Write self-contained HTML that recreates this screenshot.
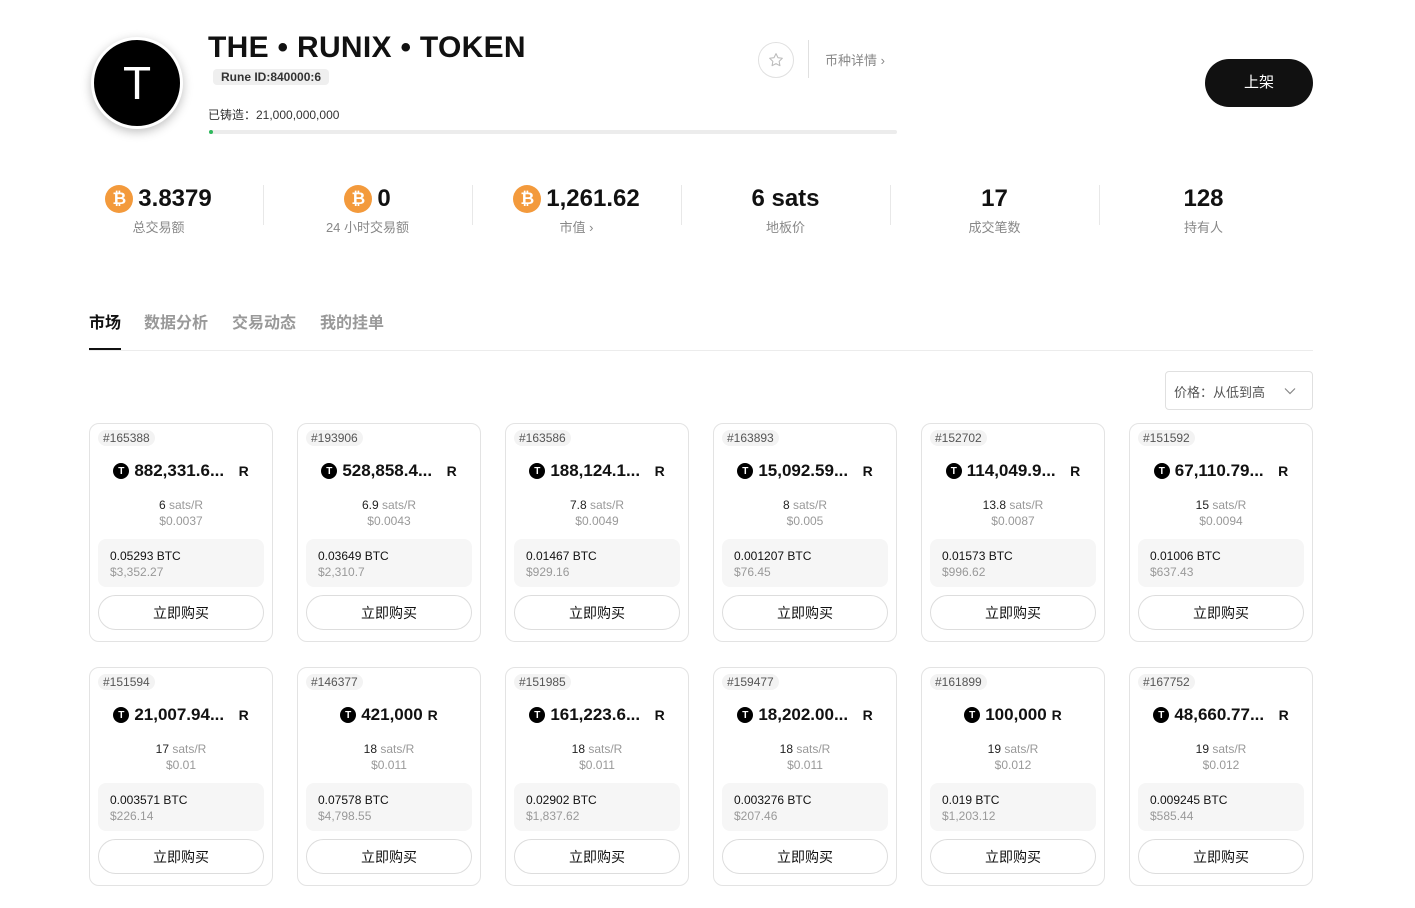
<!DOCTYPE html>
<html><head><meta charset="utf-8"><style>
*{margin:0;padding:0;box-sizing:border-box}
body{width:1415px;height:908px;background:#fff;font-family:"Liberation Sans","Noto Sans CJK SC",sans-serif;color:#111;position:relative;overflow:hidden}
.a{position:absolute}
.logo{left:91px;top:37px;width:92px;height:92px;border-radius:50%;background:#000;border:3px solid #fff;box-shadow:0 3px 10px rgba(0,0,0,.25);color:#fff;font-size:46px;text-align:center;line-height:86px}
.stat{width:209px;text-align:center}
.stat .v{font-size:24px;font-weight:bold;height:32px;display:flex;align-items:center;justify-content:center;gap:5px}
.stat .l{font-size:13px;color:#888;margin-top:2px}
.btc{width:28px;height:28px;border-radius:50%;background:#f39a3c;color:#fff;font-size:17px;font-weight:bold;display:inline-flex;align-items:center;justify-content:center}
.div{width:1px;height:40px;background:#e8e8e8;top:185px}
.card{width:184px;height:219px;border:1px solid #e3e3e3;border-radius:10px;background:#fff}
.card .id{position:absolute;left:8px;top:6px;background:#f3f3f3;border-radius:8px;font-size:12px;color:#555;padding:1px 5px}
.card .amt{position:absolute;left:0;right:0;top:37px;text-align:center;font-size:17px;font-weight:bold;display:flex;justify-content:center;align-items:center;gap:5px}
.t{width:16px;height:16px;border-radius:50%;background:#000;color:#fff;font-size:10px;display:inline-flex;align-items:center;justify-content:center}
.card .s{position:absolute;left:0;right:0;top:74px;text-align:center;font-size:12px;color:#222}
.card .s span{color:#999}
.card .u{position:absolute;left:0;right:0;top:90px;text-align:center;font-size:12px;color:#999}
.card .box{position:absolute;left:8px;top:115px;width:166px;height:48px;background:#f6f6f6;border-radius:8px;padding:9px 12px;font-size:12px;line-height:16px}
.card .box div+div{color:#999}
.card .b{position:absolute;left:8px;top:171px;width:166px;height:35px;border:1px solid #ddd;border-radius:18px;text-align:center;line-height:34px;font-size:14px}
</style></head><body>
<div class="a logo">T</div>
<div class="a" style="left:208px;top:31px;font-size:30px;font-weight:bold;letter-spacing:0.3px">THE • RUNIX • TOKEN</div>
<div class="a" style="left:213px;top:69px;background:#efefef;border-radius:4px;font-size:12px;font-weight:bold;color:#333;padding:1px 8px">Rune ID:840000:6</div>
<div class="a" style="left:208px;top:106px;font-size:12px;color:#333">已铸造：21,000,000,000</div>
<div class="a" style="left:209px;top:130px;width:688px;height:4px;background:#ececec;border-radius:2px"></div>
<div class="a" style="left:209px;top:130px;width:4px;height:4px;background:#2eb85c;border-radius:2px"></div>
<div class="a" style="left:758px;top:42px;width:36px;height:36px;border-radius:50%;border:1px solid #e0e0e0;display:flex;align-items:center;justify-content:center"><svg width="16" height="16" viewBox="0 0 24 24"><path d="M12 2.5l2.9 6 6.6.9-4.8 4.6 1.2 6.5L12 17.4l-5.9 3.1 1.2-6.5L2.5 9.4l6.6-.9z" fill="none" stroke="#bbb" stroke-width="1.6" stroke-linejoin="round"/></svg></div>
<div class="a" style="left:808px;top:40px;width:1px;height:38px;background:#e0e0e0"></div>
<div class="a" style="left:825px;top:50px;font-size:13px;color:#888">币种详情 ›</div>
<div class="a" style="left:1205px;top:59px;width:108px;height:48px;border-radius:24px;background:#111;color:#fff;font-size:15px;text-align:center;line-height:48px">上架</div>

<div class="a stat" style="left:54px;top:183px"><div class="v"><span class="btc">₿</span>3.8379</div><div class="l">总交易额</div></div>
<div class="a div" style="left:263px"></div>
<div class="a stat" style="left:263px;top:183px"><div class="v"><span class="btc">₿</span>0</div><div class="l">24 小时交易额</div></div>
<div class="a div" style="left:472px"></div>
<div class="a stat" style="left:472px;top:183px"><div class="v"><span class="btc">₿</span>1,261.62</div><div class="l">市值 ›</div></div>
<div class="a div" style="left:681px"></div>
<div class="a stat" style="left:681px;top:183px"><div class="v">6 sats</div><div class="l">地板价</div></div>
<div class="a div" style="left:890px"></div>
<div class="a stat" style="left:890px;top:183px"><div class="v">17</div><div class="l">成交笔数</div></div>
<div class="a div" style="left:1099px"></div>
<div class="a stat" style="left:1099px;top:183px"><div class="v">128</div><div class="l">持有人</div></div>

<div class="a" style="left:89px;top:309px;font-size:16px;font-weight:bold">市场</div>
<div class="a" style="left:144px;top:309px;font-size:16px;font-weight:bold;color:#999">数据分析</div>
<div class="a" style="left:232px;top:309px;font-size:16px;font-weight:bold;color:#999">交易动态</div>
<div class="a" style="left:320px;top:309px;font-size:16px;font-weight:bold;color:#999">我的挂单</div>
<div class="a" style="left:89px;top:350px;width:1224px;height:1px;background:#ececec"></div>
<div class="a" style="left:89px;top:348px;width:32px;height:2px;background:#111"></div>
<div class="a" style="left:1165px;top:371px;width:148px;height:39px;border:1px solid #e0e0e0;border-radius:4px;font-size:13px;color:#555;padding:10px 0 0 8px">价格：从低到高 <svg style="position:absolute;right:16px;top:15px" width="12" height="8" viewBox="0 0 12 8"><path d="M1 1.5l5 5 5-5" fill="none" stroke="#888" stroke-width="1.2"/></svg></div>

<div id="cards"></div>
<script>
const d=[["#165388","882,331.6...",1,"6","$0.0037","0.05293 BTC","$3,352.27"],["#193906","528,858.4...",1,"6.9","$0.0043","0.03649 BTC","$2,310.7"],["#163586","188,124.1...",1,"7.8","$0.0049","0.01467 BTC","$929.16"],["#163893","15,092.59...",1,"8","$0.005","0.001207 BTC","$76.45"],["#152702","114,049.9...",1,"13.8","$0.0087","0.01573 BTC","$996.62"],["#151592","67,110.79...",1,"15","$0.0094","0.01006 BTC","$637.43"],
["#151594","21,007.94...",1,"17","$0.01","0.003571 BTC","$226.14"],["#146377","421,000",0,"18","$0.011","0.07578 BTC","$4,798.55"],["#151985","161,223.6...",1,"18","$0.011","0.02902 BTC","$1,837.62"],["#159477","18,202.00...",1,"18","$0.011","0.003276 BTC","$207.46"],["#161899","100,000",0,"19","$0.012","0.019 BTC","$1,203.12"],["#167752","48,660.77...",1,"19","$0.012","0.009245 BTC","$585.44"]];
let h="";d.forEach((c,i)=>{const x=89+(i%6)*208,y=423+Math.floor(i/6)*244;
h+=`<div class="a card" style="left:${x}px;top:${y}px"><div class="id">${c[0]}</div><div class="amt"><span class="t">T</span>${c[1]}${c[2]?'&nbsp;&nbsp;':''}<span style="font-size:14px">R</span></div><div class="s">${c[3]} <span>sats/R</span></div><div class="u">${c[4]}</div><div class="box"><div>${c[5]}</div><div>${c[6]}</div></div><div class="b">立即购买</div></div>`});
document.getElementById("cards").innerHTML=h;
</script>
</body></html>
